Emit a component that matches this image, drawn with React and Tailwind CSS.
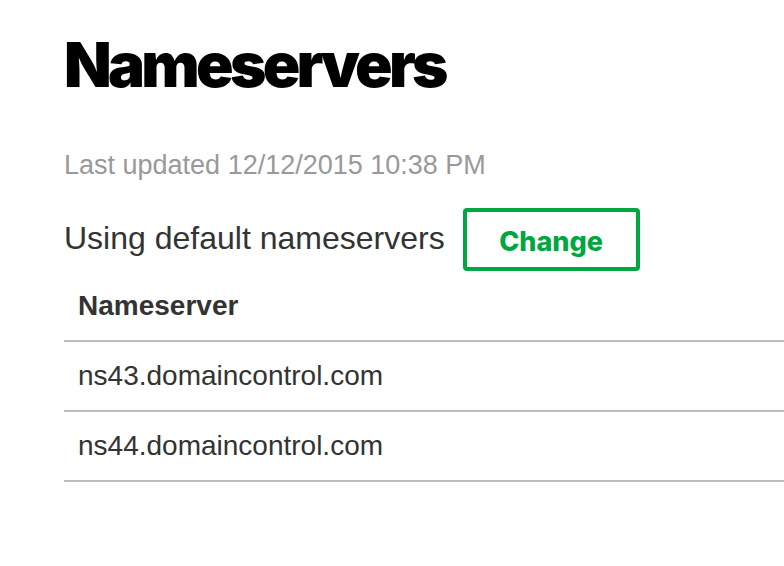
export default function App() {
  const servers = ['ns43.domaincontrol.com', 'ns44.domaincontrol.com']
  return (
    <div className="min-h-screen bg-white pl-[64px] pt-[34px] font-['Liberation_Sans',Arial,sans-serif]">
      <h1 className="font-['Inter',sans-serif] text-[62px] font-black leading-[62px] tracking-[-0.06em] text-black">
        Nameservers
      </h1>
      <p className="mt-[53px] text-[27px] leading-[32px] text-[#999999]">
        Last updated 12/12/2015 10:38 PM
      </p>
      <div className="mt-[27px] flex items-center gap-[18px]">
        <span className="mb-[4px] text-[32px] leading-[32px] text-[#333333]">
          Using default nameservers
        </span>
        <button className="flex h-[63px] w-[177px] items-center justify-center rounded-[4px] border-4 border-[#00a63f] pt-[5px] font-['Inter',sans-serif] text-[27px] font-extrabold text-[#00a63f]">
          Change
        </button>
      </div>
      <div className="flex h-[71px] items-center border-b-2 border-[#bdbdbd] pl-[14px] text-[28px] font-bold text-[#333333]">
        Nameserver
      </div>
      {servers.map((s) => (
        <div
          key={s}
          className="flex h-[70px] items-center border-b-2 border-[#bdbdbd] pl-[14px] text-[28px] text-[#333333]"
        >
          {s}
        </div>
      ))}
    </div>
  )
}
